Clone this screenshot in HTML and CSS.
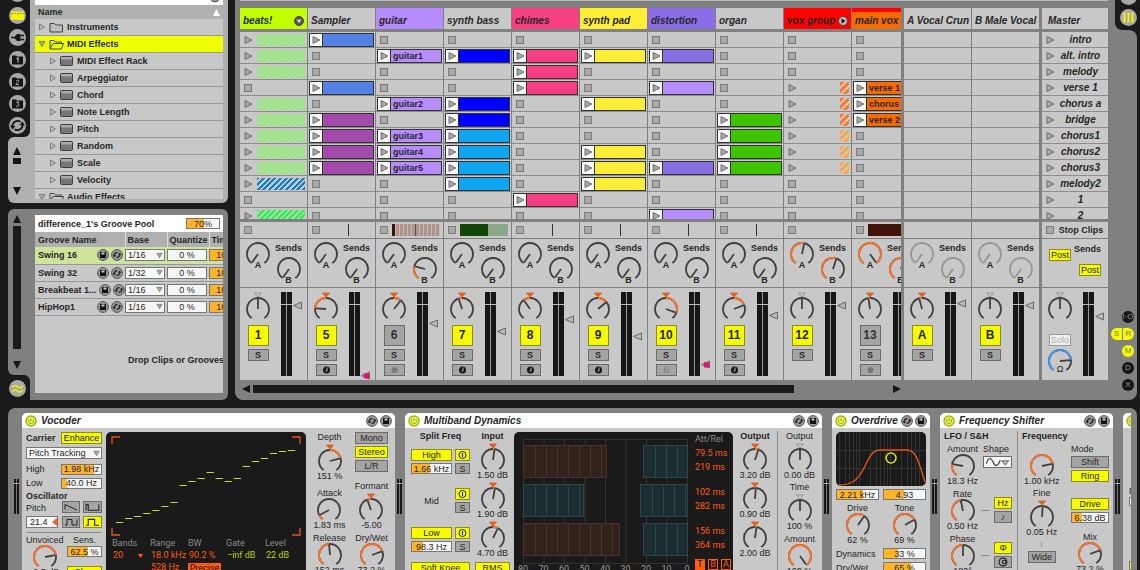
FILE: index.html
```html
<!DOCTYPE html>
<html lang="en">
<head>
<meta charset="utf-8">
<meta name="viewport" content="width=device-width, initial-scale=1">
<title>Session View</title>
<link rel="stylesheet" href="styles.css">
</head>
<body>
<svg class="symbols" aria-hidden="true">
  <symbol id="save" viewBox="0 0 12 12"><circle cx="6" cy="6" r="5.4" fill="#999" stroke="#555"/><path d="M3 3h6v6H3z" fill="#111"/><path d="M4.500 3.500h3v2h-3z" fill="#ccc"/></symbol>
  <symbol id="swap" viewBox="0 0 12 12"><circle cx="6" cy="6" r="5.4" fill="#999" stroke="#555"/><path d="M3.200 7.200C3 5 4.600 3.400 6.500 3.600M8.800 4.800C9 7 7.400 8.600 5.500 8.400" fill="none" stroke="#222" stroke-width="1.300"/><path d="M1.800 6l1.400 2.400L5 6.400zM10.200 6L8.800 3.600 7 5.600z" fill="#222"/></symbol>
  <symbol id="power" viewBox="0 0 12 12"><circle cx="6" cy="6" r="5" fill="#e8f26a" stroke="#a5b400" stroke-width="1.500"/><path d="M6 3v3.500M4.200 4.200a2.600 2.600 0 1 0 3.600 0" fill="none" stroke="#a5b400"/></symbol>
  <symbol id="onoff" viewBox="0 0 12 12"><circle cx="6" cy="6" r="4.200" fill="none" stroke="#222" stroke-width="1.200"/><path d="M6 3.500v5" stroke="#222" stroke-width="1.300"/></symbol>
  <symbol id="folder" viewBox="0 0 15 11"><path d="M1 10V1.500h4.500L7 3h6.500v7z" fill="#bdbdbd" stroke="#444" /></symbol>
  <symbol id="folder-open" viewBox="0 0 15 11"><path d="M1 10V1.500h4L6.500 3h6v2" fill="none" stroke="#444"/><path d="M1 10l3-5.500h10.500L12.500 10z" fill="none" stroke="#444"/></symbol>
  <symbol id="device" viewBox="0 0 13 10"><rect x=".5" y=".5" width="12" height="9" rx="1" fill="#777" stroke="#3c3c3c"/><path d="M1 1h11v2.500H1z" fill="#aaa"/></symbol>
  <symbol id="tri-right" viewBox="0 0 8 8"><path d="M1.500 1L6.500 4 1.500 7z" fill="#bbb" stroke="#777" stroke-width=".9"/></symbol>
  <symbol id="tri-down" viewBox="0 0 8 8"><path d="M1 1.500h6L4 6.500z" fill="#aaa" stroke="#777" stroke-width=".9"/></symbol>
  <symbol id="arrow-up" viewBox="0 0 8 8"><path d="M4 0l4 8H0z" fill="#151515"/></symbol>
  <symbol id="arrow-down" viewBox="0 0 8 8"><path d="M0 0h8L4 8z" fill="#151515"/></symbol>
</svg>

<div class="upper">
  <aside class="side">
    <section class="browser" aria-label="Browser">
      <div class="browser-left">
        <div class="rail-frame"><nav class="rail">
          <button aria-label="Hide browser"><svg viewBox="0 0 17 17"><path d="M5 11l6-5" stroke="#222"/></svg></button>
          <button aria-label="Live devices"><svg viewBox="0 0 17 17"><path d="M2 4.500h13v8.500H2z" fill="#f4f400"/><path d="M2 6.500h13" stroke="#999900" stroke-dasharray="2 1"/></svg></button>
          <button aria-label="Plug-in devices"><svg viewBox="0 0 17 17"><path d="M2 8.500h4M11.500 6.500H15M11.500 10.500H15" stroke="#151515" stroke-width="1.600"/><path d="M5 8.500l3-3.500h3.500v7H8z" fill="#151515"/></svg></button>
          <button aria-label="Files 1"><svg viewBox="0 0 17 17"><path d="M3 4.500h4l1 1h6v8H3z" fill="#151515"/><path d="M7.500 8l1.500-1v4.500" fill="none" stroke="#aaa" stroke-width="1.300"/></svg></button>
          <button aria-label="Files 2"><svg viewBox="0 0 17 17"><path d="M3 4.500h4l1 1h6v8H3z" fill="#151515"/><path d="M7 8q1.500-1.500 3 0c0 1.500-3 1.500-3 3.500h3" fill="none" stroke="#aaa"/></svg></button>
          <button aria-label="Files 3"><svg viewBox="0 0 17 17"><path d="M3 4.500h4l1 1h6v8H3z" fill="#151515"/><path d="M7 7h3L8.500 9q2 0 1.300 1.700-1 1.300-2.800.3" fill="none" stroke="#aaa"/></svg></button>
          <button aria-label="Hot-swap"><svg viewBox="0 0 17 17"><path d="M3.500 9.500C3 5.500 7.500 2.500 11.500 4.800M13.500 7.500c.5 4-4 7-8 4.700" fill="none" stroke="#151515" stroke-width="1.800"/><path d="M1 8.500l2.500 4 3-3.500zM16 8.500l-2.500-4-3 3.500z" fill="#151515"/></svg></button>
        </nav></div>
        <div class="scroll-arrows">
          <svg class="arrow"><use href="#arrow-up"/></svg>
          <span class="thumb"></span>
          <svg class="arrow last"><use href="#arrow-down"/></svg>
        </div>
      </div>
      <div class="browser-main">
        <div class="list">
          <div class="search"><svg viewBox="0 0 10 10"><circle cx="5" cy="5" r="4" fill="#999" stroke="#555"/></svg></div>
          <div class="list-head"><span>Name</span><svg viewBox="0 0 8 8"><path d="M4 0l4 8H0z" fill="#fff"/></svg></div>
          <div class="item"><svg class="tri"><use href="#tri-right"/></svg><svg class="fold"><use href="#folder"/></svg>Instruments</div>
          <div class="item selected"><svg class="tri"><use href="#tri-down"/></svg><svg class="fold"><use href="#folder-open"/></svg>MIDI Effects</div>
          <div class="item child"><svg class="tri"><use href="#tri-right"/></svg><svg class="dev"><use href="#device"/></svg>MIDI Effect Rack</div>
          <div class="item child"><svg class="tri"><use href="#tri-right"/></svg><svg class="dev"><use href="#device"/></svg>Arpeggiator</div>
          <div class="item child"><svg class="tri"><use href="#tri-right"/></svg><svg class="dev"><use href="#device"/></svg>Chord</div>
          <div class="item child"><svg class="tri"><use href="#tri-right"/></svg><svg class="dev"><use href="#device"/></svg>Note Length</div>
          <div class="item child"><svg class="tri"><use href="#tri-right"/></svg><svg class="dev"><use href="#device"/></svg>Pitch</div>
          <div class="item child"><svg class="tri"><use href="#tri-right"/></svg><svg class="dev"><use href="#device"/></svg>Random</div>
          <div class="item child"><svg class="tri"><use href="#tri-right"/></svg><svg class="dev"><use href="#device"/></svg>Scale</div>
          <div class="item child"><svg class="tri"><use href="#tri-right"/></svg><svg class="dev"><use href="#device"/></svg>Velocity</div>
          <div class="item"><svg class="tri"><use href="#tri-down"/></svg><svg class="fold"><use href="#folder-open"/></svg>Audio Effects</div>
        </div>
      </div>
    </section>

    <section class="groove" aria-label="Groove Pool">
      <div class="groove-left">
        <div class="groove-scroll">
          <svg class="arrow"><use href="#arrow-up"/></svg>
          <span class="bar"></span>
          <svg class="arrow"><use href="#arrow-down"/></svg>
        </div>
        <div class="groove-tab"><div class="groove-tab-inner"><button aria-label="Groove Pool"><svg viewBox="0 0 17 17"><path d="M3 7.500c2.500-3 4-2 5.500-.8s3 1.800 5.500-1.200M3 12c2.500-3 4-2 5.500-.8s3 1.800 5.500-1.200" fill="none" stroke="#e6f000" stroke-width="1.600"/></svg></button></div></div>
      </div>
      <div class="groove-main">
        <div class="pool">
          <div class="pool-title"><span>difference_1's Groove Pool</span><input class="field amount" aria-label="Global groove amount" value="70%" style="--fill:54%"></div>
          <table class="grooves">
            <thead><tr><th class="c-name">Groove Name</th><th class="c-base">Base</th><th class="c-quant">Quantize</th><th>Timing</th></tr></thead>
            <tbody id="groove-rows"></tbody>
          </table>
          <p class="hint">Drop Clips or Grooves Here</p>
        </div>
      </div>
    </section>
  </aside>

  <main class="session">
    <div class="session-main">
      <div class="overview"></div>
      <div class="board">
        <div class="tracks" id="tracks"></div>
        <div class="returns" id="returns"></div>
        <div class="master" id="master"></div>
      </div>
      <div class="hscroll">
        <svg viewBox="0 0 8 8"><path d="M8 0v8L0 4z" fill="#151515"/></svg>
        <div class="hscroll-lane"><div class="hscroll-thumb"></div></div>
        <svg viewBox="0 0 8 8"><path d="M0 0v8l8-4z" fill="#151515"/></svg>
      </div>
    </div>
    <div class="session-rail">
      <div class="notch"><div class="notch-inner">
        <button aria-label="Arrangement"><svg viewBox="0 0 17 17"><path d="M4 11h9" stroke="#333"/></svg></button>
        <button aria-label="Session"><svg viewBox="0 0 17 17"><path d="M4.500 3.500v10M8.500 3.500v10M12.500 3.500v10" stroke="#f4f400" stroke-width="2"/></svg></button>
      </div></div>
      <div class="toggles">
        <button class="dot">I·O</button>
        <div class="pair"><button class="dot on half-l">S</button><button class="dot on half-r">R</button></div>
        <button class="dot on">M</button>
        <button class="dot">D</button>
        <button class="dot">X</button>
      </div>
    </div>
  </main>
</div>

<section class="chain" aria-label="Devices">
  <div class="chain-inner">
    <article class="device vocoder">
      <header><svg class="ic"><use href="#power"/></svg><h2>Vocoder</h2><svg class="ic"><use href="#swap"/></svg><svg class="ic"><use href="#save"/></svg></header>
      <div class="body">
        <div class="voc-left">
          <div class="row"><b>Carrier</b><button class="btn on w41">Enhance</button></div>
          <div class="select-wrap mt3"><select aria-label="Carrier"><option>Pitch Tracking</option></select><svg><use href="#tri-down"/></svg></div>
          <label class="row mt4">High<input class="field w41" value="1.98 kHz" style="--fill:82%"></label>
          <label class="row mt2">Low<input class="field w41" value="40.0 Hz" style="--fill:12%"></label>
          <b class="line mt2">Oscillator</b>
          <div class="osc">
            <label for="osc-pitch" class="osc-label">Pitch</label>
            <button class="btn wave" aria-label="Saw"><svg viewBox="0 0 16 9"><path d="M2 7V2l12 5.500" /></svg></button>
            <button class="btn wave" aria-label="Pulse"><svg viewBox="0 0 16 9"><path d="M2 7.500V2h2v5.500h10V2"/></svg></button>
            <div class="pitch-field"><input class="field" id="osc-pitch" value="21.4" style="--fill:0%"><svg viewBox="0 0 5 8"><path d="M5 0v8L0 4z" fill="#ff5c2c"/></svg></div>
            <button class="btn wave" aria-label="Square low"><svg viewBox="0 0 16 9"><path d="M2 7.500h2V2h5v5.500h5V2"/></svg></button>
            <button class="btn wave on" aria-label="Square"><svg viewBox="0 0 16 9"><path d="M2 7.500h2V2h6v5.500h4"/></svg></button>
          </div>
          <div class="unvoiced">
            <live-knob label="Unvoiced" value="-0.5 dB" angle="80"></live-knob>
            <div class="sens"><label for="sens">Sens.</label><input class="field" id="sens" value="62.5 %" style="--fill:62%"><button class="btn on mt9">Slow</button></div>
          </div>
        </div>
        <div class="lcd voc-lcd">
          <svg class="bands" id="vocoder-bands" viewBox="0 0 200 106"><path d="M6 12V5h8M186 5h8v7M6 96v7h8M186 103h8v-7" fill="none" stroke="#e8550c" stroke-width="1.300"/></svg>
          <div class="lcd-grid">
            <span class="dim">Bands</span><span class="dim">Range</span><span class="dim">BW</span><span class="dim">Gate</span><span class="dim">Level</span>
            <span class="pad">20 <svg class="mini" viewBox="0 0 5 4"><path d="M0 0h5L2.500 4z" fill="#ff5c0c"/></svg></span><span class="pad">18.0 kHz</span><span class="pad">90.2 %</span><span class="pad lime">−inf dB</span><span class="pad lime">22 dB</span>
            <span></span><span class="pad">528 Hz</span><span class="precise">Precise</span>
          </div>
        </div>
        <div class="knob-col w37">
          <live-knob label="Depth" value="151 %" angle="75" from="0" marker="on"></live-knob>
          <live-knob class="mt7" label="Attack" value="1.83 ms" angle="-118"></live-knob>
          <live-knob class="mt3" label="Release" value="152 ms" angle="-5"></live-knob>
        </div>
        <div class="knob-col w37">
          <button class="btn w33">Mono</button><button class="btn on w33 mt2">Stereo</button><button class="btn w33 mt2">L/R</button>
          <live-knob class="mt9" label="Formant" value="-5.00" angle="-20" from="0" marker="on"></live-knob>
          <live-knob class="mt3" label="Dry/Wet" value="73.2 %" angle="70"></live-knob>
        </div>
      </div>
    </article>

    <article class="device multiband">
      <header><svg class="ic"><use href="#power"/></svg><h2>Multiband Dynamics</h2><svg class="ic"><use href="#swap"/></svg><svg class="ic"><use href="#save"/></svg></header>
      <div class="body tight">
        <div class="split">
          <b class="line center">Split Freq</b>
          <div class="band-set">
            <button class="btn on">High</button><button class="btn on" aria-label="High band on"><svg viewBox="0 0 12 12"><use href="#onoff"/></svg></button>
            <input class="field" aria-label="High crossover" value="1.66 kHz" style="--fill:45%"><button class="btn">S</button>
          </div>
          <div class="band-set">
            <span class="mid">Mid</span><button class="btn on" aria-label="Mid band on"><svg viewBox="0 0 12 12"><use href="#onoff"/></svg></button>
            <button class="btn">S</button>
          </div>
          <div class="band-set">
            <button class="btn on">Low</button><button class="btn on" aria-label="Low band on"><svg viewBox="0 0 12 12"><use href="#onoff"/></svg></button>
            <input class="field" aria-label="Low crossover" value="98.3 Hz" style="--fill:27%"><button class="btn">S</button>
          </div>
          <button class="btn on knee">Soft Knee</button>
        </div>
        <div class="knob-col input-col">
          <b class="line center">Input</b>
          <live-knob value="1.50 dB" angle="8" from="0" marker="on"></live-knob>
          <live-knob value="1.90 dB" angle="10" from="0" marker="on"></live-knob>
          <live-knob value="4.70 dB" angle="27" from="0" marker="on"></live-knob>
          <button class="btn on mt4 full">RMS</button>
        </div>
        <div class="lcd multi-lcd">
          <svg class="plot" viewBox="0 0 178 138" id="multi-plot"></svg>
          <div class="times">
            <span class="dim">Att/Rel</span>
            <span>79.5 ms</span><span>219 ms</span>
            <span class="sep">102 ms</span><span>282 ms</span>
            <span class="sep">156 ms</span><span>364 ms</span>
            <div class="tba"><button class="sel">T</button><button>B</button><button>A</button></div>
          </div>
        </div>
        <div class="knob-col output-col">
          <b class="line center">Output</b>
          <live-knob value="3.20 dB" angle="18" from="0" marker="on"></live-knob>
          <live-knob value="0.90 dB" angle="4" from="0" marker="on"></live-knob>
          <live-knob value="2.00 dB" angle="8" from="0" marker="on"></live-knob>
        </div>
        <div class="knob-col global-col">
          <live-knob label="Output" value="0.00 dB" angle="0" from="0" marker="off"></live-knob>
          <live-knob class="mt2" label="Time" value="100 %" angle="0" from="0" marker="off"></live-knob>
          <live-knob class="mt3" label="Amount" value="100 %" angle="145"></live-knob>
        </div>
      </div>
    </article>

    <article class="device overdrive">
      <header><svg class="ic"><use href="#power"/></svg><h2>Overdrive</h2><svg class="ic"><use href="#swap"/></svg><svg class="ic"><use href="#save"/></svg></header>
      <div class="body stack">
        <svg class="curve" viewBox="0 0 90 54">
          <rect width="90" height="54" rx="5" fill="#1a1a1a"/>
          <path d="M0 18.500h90M0 36.500h90M3.500 0v54M9.500 0v54M13.500 0v54M17.500 0v54M20.500 0v54M23.500 0v54M34.500 0v54M40.500 0v54M44.500 0v54M48.500 0v54M51.500 0v54M54.500 0v54M65.500 0v54M71.500 0v54M75.500 0v54M79.500 0v54M83.500 0v54" stroke="#333"/>
          <path d="M3 53C16 53 22 48 28 36S36 18 45 18h26c10 0 12 14 18 32" fill="none" stroke="#e0560c" stroke-width="1.400"/>
          <circle cx="55" cy="26" r="5" fill="none" stroke="#d0e000" stroke-width="1.600"/>
        </svg>
        <div class="two"><input class="field" aria-label="Frequency" value="2.21 kHz" style="--fill:64%"><input class="field" aria-label="Bandwidth" value="4.93" style="--fill:50%"></div>
        <div class="two"><live-knob label="Drive" value="62 %" angle="35"></live-knob><live-knob label="Tone" value="69 %" angle="60"></live-knob></div>
        <label class="row">Dynamics<input class="field w43" value="33 %" style="--fill:33%"></label>
        <label class="row">Dry/Wet<input class="field w43" value="65 %" style="--fill:65%"></label>
      </div>
    </article>

    <article class="device shifter">
      <header><svg class="ic"><use href="#power"/></svg><h2>Frequency Shifter</h2><svg class="ic"><use href="#swap"/></svg><svg class="ic"><use href="#save"/></svg></header>
      <div class="body tight">
        <div class="lfo">
          <b class="line">LFO / S&amp;H</b>
          <div class="lfo-grid">
            <live-knob label="Amount" value="18.3 Hz" angle="-80"></live-knob>
            <div class="shape"><span>Shape</span><button class="btn white" aria-label="Sine"><svg viewBox="0 0 24 9"><path d="M2 6C4 0 6 0 8 4.500S12 9 14.500 3" fill="none" stroke="#333"/><path d="M16 3.500h6L19 7z" fill="#ccc" stroke="#777"/></svg></button></div>
            <live-knob label="Rate" value="0.50 Hz" angle="-12"></live-knob>
            <div class="sync"><i></i><div><button class="btn on">Hz</button><button class="btn">♪</button></div></div>
            <live-knob label="Phase" value="180°" angle="0"></live-knob>
            <div class="sync"><i></i><div><button class="btn on">Φ</button><button class="btn" aria-label="Spin"><svg viewBox="0 0 12 9"><circle cx="6" cy="4.500" r="3.500" fill="none" stroke="#222"/><circle cx="7" cy="4.500" r="1.600" fill="none" stroke="#222"/></svg></button></div></div>
          </div>
        </div>
        <div class="freq">
          <b class="line">Frequency</b>
          <div class="freq-grid">
            <div class="knob-col">
              <live-knob class="mt10" value="1.00 kHz" angle="78"></live-knob>
              <live-knob class="mt2" label="Fine" value="0.05 Hz" angle="4" from="0" marker="on"></live-knob>
              <i class="tick"></i>
              <button class="btn wide">Wide</button>
            </div>
            <div class="mode">
              <span>Mode</span>
              <button class="btn mt2">Shift</button><button class="btn on mt2">Ring</button>
              <button class="btn on mt16">Drive</button><input class="field mt2" aria-label="Drive amount" value="6.38 dB" style="--fill:28%">
              <live-knob class="mt9" label="Mix" value="73.2 %" angle="70"></live-knob>
            </div>
          </div>
        </div>
      </div>
    </article>

    <article class="device cut">
      <header><svg class="ic"><use href="#power"/></svg></header>
      <div class="body cut-body"><span>D</span><i class="cut-field"></i><i class="cut-btn"></i></div>
    </article>
  </div>
</section>
<script src="app.js"></script>
</body>
</html>
```
FILE: styles.css
```css
:root {
  --black: #1a1a1a;
  --frame: #808080;
  --panel: #b0b0b0;
  --face: #c8c8c8;
  --yellow: #f7fb00;
  --orange: #ffb428;
  --hot: #ff5c0c;
  --text: #262626;
}
* { box-sizing: border-box; }
body {
  margin: 0;
  height: 100vh;
  overflow: hidden;
  display: grid;
  grid-template-rows: auto 1fr;
  grid-template-columns: minmax(0, 1fr);
  background: var(--black);
  color: var(--text);
  font: 9px/10px "Liberation Sans", Arial, sans-serif;
}
button, input, select { font: inherit; color: inherit; margin: 0; padding: 0; border: 0; border-radius: 0; }
button { display: block; background: none; text-align: center; }
svg { display: block; flex: none; }
h2, p { margin: 0; }
.symbols { position: absolute; width: 0; height: 0; }

.upper { display: flex; gap: 7px; padding-right: 3px; min-width: 0; }
.side { width: 228px; padding-left: 8px; flex: none; display: grid; grid-template-columns: minmax(0, 1fr); grid-template-rows: 203px 1fr; gap: 6px; font-weight: bold; }

/* browser */
.browser { display: flex; min-height: 0; }
.browser-left { width: 27px; flex: none; display: flex; flex-direction: column; }
.rail-frame { background: var(--panel); height: 137px; }
.rail { width: 22px; height: 137px; background: var(--black); border-radius: 0 0 6px 0; display: flex; flex-direction: column; justify-content: flex-end; gap: 5px; padding: 0 0 3px 1px; overflow: hidden; }
.rail button, .groove-tab button, .notch button { width: 17px; height: 17px; border-radius: 50%; background: #a8a8a8; flex: none; }
.rail button svg, .groove-tab button svg, .notch button svg { width: 17px; height: 17px; fill: none; }
.scroll-arrows { flex: 1; background: var(--panel); border-radius: 6px 0 0 6px; padding: 10px 0 8px 5px; display: flex; flex-direction: column; gap: 3px; }
.arrow { width: 8px; height: 8px; }
.arrow.last { margin-top: auto; }
.thumb { width: 8px; height: 6px; background: #151515; }
.browser-main { flex: 1; min-width: 0; background: var(--panel); border-radius: 0 0 6px 0; padding: 0 5px 4px 0; overflow: hidden; }
.list { height: 199px; overflow: hidden; background: var(--face); }
.search { height: 5px; background: #fff; display: flex; justify-content: flex-end; align-items: flex-end; padding: 0 3px 2px; overflow: hidden; }
.search svg { width: 10px; height: 10px; }
.list-head { height: 14px; padding: 0 3px; background: var(--panel); display: flex; justify-content: space-between; align-items: center; }
.list-head svg { width: 7px; height: 7px; }
.item { height: 17px; padding-left: 3px; display: flex; align-items: center; border-bottom: 1px solid #989898; white-space: nowrap; }
.item.child { padding-left: 14px; }
.item.selected { background: #eeff00; }
.tri { width: 8px; height: 8px; }
.fold { width: 15px; height: 11px; margin: 0 3px; }
.dev { width: 13px; height: 10px; margin: 0 4px 0 3px; }

/* groove pool */
.groove { display: flex; min-height: 0; }
.groove-left { width: 27px; flex: none; display: flex; flex-direction: column; }
.groove-scroll { flex: 1; background: var(--frame); border-radius: 6px 0 0 6px; padding: 6px 0 6px 5px; display: flex; flex-direction: column; gap: 3px; }
.groove-scroll .bar { flex: 1; width: 8px; background: var(--black); margin-bottom: 9px; }
.groove-tab { height: 25px; background: var(--frame); border-radius: 0 0 0 6px; }
.groove-tab-inner { width: 22px; height: 25px; background: var(--black); border-radius: 0 6px 0 0; padding: 5px 0 0 1px; }
.groove-main { flex: 1; min-width: 0; background: var(--frame); border-radius: 0 6px 6px 0; padding: 6px 5px 7px 0; }
.pool { height: 100%; overflow: hidden; background: var(--face); }
.pool-title { height: 17px; padding: 0 3px; background: #fff; display: flex; justify-content: space-between; align-items: center; }
.amount { width: 34px; height: 12px; }
.grooves { border-collapse: collapse; table-layout: fixed; width: 230px; }
.grooves th, .grooves td { height: 17px; padding: 0 1px 0 0; text-align: left; border-bottom: 1px solid #989898; }
.grooves th { height: 15px; background: var(--panel); padding-left: 2px; border-right: 1px solid #ddd; border-bottom: 0; }
.c-name { width: 90px; }
.c-base { width: 42px; }
.c-quant { width: 42px; }
.grooves .c-name { padding-left: 3px; }
.grooves .name { display: flex; align-items: center; gap: 2px; padding: 0 1px 0 3px; }
.grooves .name span { flex: 1; white-space: nowrap; }
.grooves .name svg { width: 12px; height: 12px; }
.grooves tr.sel td { background: #cde49b; }
.grooves .field, .grooves .select-wrap { width: 40px; height: 12px; font-weight: normal; }
.hint { padding: 39px 0 0 93px; white-space: nowrap; }

/* shared controls */
.field {
  height: 11px; min-width: 0; text-align: center; border: 1px solid #777; font-weight: normal;
  background: linear-gradient(to right, var(--orange) var(--fill), #f6f6f6 var(--fill));
}
.btn { height: 12px; background: #a4a4a4; border: 1px solid #6c6c6c; line-height: 10px; }
.btn.on { background: var(--yellow); border-color: #8c8c20; }
.btn.white { background: #f6f6f6; }
.btn svg { margin: 0 auto; width: 100%; height: 10px; }
.select-wrap { display: grid; height: 12px; }
.select-wrap > * { grid-area: 1 / 1; }
.select-wrap select { appearance: none; width: 100%; background: #f6f6f6; border: 1px solid #777; padding-left: 2px; }
.select-wrap svg { width: 7px; height: 7px; justify-self: end; align-self: center; margin-right: 2px; pointer-events: none; }
live-knob { display: flex; flex-direction: column; align-items: center; text-align: center; white-space: nowrap; }
.dial { position: relative; display: block; }
.dial input { position: absolute; inset: 0; width: 100%; height: 100%; opacity: 0; }
.w33 { width: 33px; }
.w37 { width: 37px; }
.w41 { width: 41px; }
.w43 { width: 43px; }
.mt2 { margin-top: 2px; }
.mt3 { margin-top: 3px; }
.mt4 { margin-top: 4px; }
.mt7 { margin-top: 7px; }
.mt9 { margin-top: 9px; }
.mt10 { margin-top: 10px; }
.mt16 { margin-top: 16px; }

/* session */
.session { flex: 1; min-width: 0; display: flex; }
.session-main { flex: 1; min-width: 0; background: var(--frame); padding-left: 5px; border-radius: 0 0 0 8px; }
.overview { height: 1px; background: #bbb; }
.board { margin-top: 7px; display: flex; gap: 3px; }
.tracks { flex: 1; min-width: 0; display: flex; gap: 1px; overflow: hidden; }
.returns { display: flex; gap: 1px; }
.col { width: 67px; flex: none; display: flex; flex-direction: column; }
.master .col { width: 66px; }
.head { height: 21px; display: flex; align-items: center; justify-content: space-between; padding: 4px 3px 0; font: italic bold 10px/12px "Liberation Sans", Arial, sans-serif; white-space: nowrap; overflow: hidden; }
.head.grouped { border-top: 4px solid #f00; padding-top: 0; }
.head svg { width: 10px; height: 10px; }
.master .head { padding-left: 6px; }
.slots { margin-top: 3px; height: 187px; overflow: hidden; }
.slot { height: 16px; background: var(--face); border-bottom: 1px solid #8c8c8c; display: flex; align-items: center; padding-left: 4px; }
.slot.filled { padding: 0 1px; }
.stop { width: 8px; height: 8px; background: #a8a8a8; border: 1px solid #7c7c7c; flex: none; }
.launch { width: 9px; height: 10px; flex: none; }
.launch svg { width: 9px; height: 10px; }
.clip { flex: 1; height: 14px; display: flex; align-items: center; border: 1px solid #333; overflow: hidden; font-weight: bold; white-space: nowrap; }
.clip .play { width: 13px; height: 12px; background: #fff; border-right: 1px solid #333; display: grid; place-items: center; flex: none; margin-right: 2px; }
.clip .play svg { width: 9px; height: 10px; }
.hatch { height: 12px; margin-left: auto; margin-right: 2px; width: 48px; background: repeating-linear-gradient(135deg, var(--ink) 0 2px, var(--face) 2px 4px); }
.hatch.narrow { width: 9px; background: repeating-linear-gradient(135deg, var(--ink) 0 3px, var(--face) 3px 5px); }
.scene { flex: 1; text-align: center; padding-right: 2px; font: italic bold 10px/12px "Liberation Sans", Arial, sans-serif; }
.status { margin-top: 3px; height: 16px; padding-left: 4px; background: var(--face); display: flex; align-items: center; font-weight: bold; overflow: hidden; }
.status .graph { margin-left: 4px; width: 48px; height: 12px; }
.status .label { flex: 1; text-align: center; }
.sends { margin-top: 1px; height: 48px; background: var(--face); display: flex; font-weight: bold; }
.send-a { width: 36px; padding-top: 3px; }
.send-b { width: 25px; padding-top: 4px; display: flex; flex-direction: column; align-items: center; }
.send-b live-knob { margin-top: 4px; }
.sends .val { line-height: 8px; margin-top: -3px; }
.posts { width: 100%; padding: 5px 7px 0 7px; display: flex; justify-content: space-between; align-items: flex-start; }
.posts .btn { width: 22px; font-weight: normal; }
.posts .first { margin-top: 5px; }
.posts-right { display: flex; flex-direction: column; align-items: flex-end; gap: 10px; }
.strip { margin-top: 1px; height: 92px; background: var(--face); display: grid; grid-template-columns: 36px 11px 10px; column-gap: 5px; }
.strip-left { padding-top: 2px; display: flex; flex-direction: column; align-items: center; gap: 3px; }
.strip-left .btn { width: 21px; font-weight: bold; }
.strip-left .num { height: 21px; margin-top: 3px; font: bold 12px/19px "Liberation Sans", Arial, sans-serif; }
.strip-left .num.off { color: #333; }
.strip-left .solo { width: 22px; background: #f0f0f0; color: #aaa; font-weight: normal; border-color: #999; margin-top: 12px; }
.strip-left .cue .val { margin-top: -7px; }
.meter { margin-top: 4px; height: 84px; background: linear-gradient(to bottom, transparent 12px, #bbb 12px 13px, transparent 13px), linear-gradient(to right, #171717 5px, #999 5px 6px, #171717 6px); }
.lane { position: relative; margin-left: -4px; width: 9px; height: 92px; overflow: hidden; }
.lane svg { position: absolute; left: 0; width: 9px; height: 9px; }
.lane input { position: absolute; inset: 0; width: 100%; height: 100%; opacity: 0; }
.hscroll { height: 20px; display: flex; align-items: center; gap: 3px; padding: 0 207px 2px 2px; }
.hscroll svg { width: 8px; height: 8px; }
.hscroll-lane { flex: 1; }
.hscroll-thumb { width: 85%; height: 8px; background: var(--black); }
.session-rail { width: 29px; flex: none; display: flex; flex-direction: column; }
.notch { background: var(--frame); padding-left: 7px; }
.notch-inner { height: 30px; background: var(--black); border-radius: 0 0 0 7px; display: flex; flex-direction: column; justify-content: flex-end; gap: 4px; padding: 0 0 4px 5px; overflow: hidden; }
.toggles { flex: 1; background: var(--frame); border-radius: 0 8px 8px 0; display: flex; flex-direction: column; align-items: flex-end; justify-content: flex-end; gap: 5px; padding: 0 3px 9px 0; }
.dot { width: 12px; height: 12px; border-radius: 50%; background: #151515; color: #999; font-size: 8px; line-height: 12px; }
.dot.on { background: var(--yellow); color: #777; }
.pair { display: flex; gap: 1px; }
.pair .dot { width: 11px; }
.pair .half-l { border-radius: 6px 0 0 6px; }
.pair .half-r { border-radius: 0 6px 6px 0; }

/* device chain */
.chain { margin: 8px 3px 0 8px; padding: 5px 6px 0 0; background: var(--frame); border-radius: 7px 7px 0 0; min-height: 0; }
.chain-inner { display: flex; height: 100%; overflow: hidden; }
.device { flex: none; display: flex; margin-left: 10px; flex-direction: column; background: var(--face); border-radius: 5px 5px 0 0; position: relative; }
.device::before { content: ""; position: absolute; left: -8px; top: 66px; width: 5px; height: 35px; background: linear-gradient(to bottom, transparent 4px, #aaa 4px 5px, transparent 5px), linear-gradient(to right, #171717 2px, #777 2px 3px, #171717 3px); }
.device header { height: 15px; background: #fff; border-radius: 5px 5px 0 0; display: flex; align-items: center; gap: 2px; padding: 0 3px; }
.device h2 { flex: 1; margin-left: 2px; white-space: nowrap; font: italic bold 10px/12px "Liberation Sans", Arial, sans-serif; }
.ic { width: 12px; height: 12px; }
.body { flex: 1; min-height: 0; display: flex; padding-top: 4px; }
.body.tight { padding-top: 3px; }
.row { display: flex; justify-content: space-between; align-items: center; height: 12px; }
.line { display: block; height: 10px; }
.center { text-align: center; }
.knob-col { display: flex; flex-direction: column; align-items: center; flex: none; }
.full { width: 100%; }
.lcd { background: var(--black); border-radius: 5px 5px 0 0; color: var(--hot); font-family: Roboto, sans-serif; }
.dim { color: #8a8a8a; }
.lime { color: #b9d000; }

.device.vocoder { width: 373px; margin-left: 14px; }
.vocoder .body { padding-left: 4px; }
.voc-left { width: 76px; margin-right: 4px; flex: none; }
.osc { display: grid; grid-template-columns: 32px 18px 19px; justify-content: space-between; row-gap: 3px; border-bottom: 1px solid #888; padding-bottom: 4px; }
.osc-label { align-self: end; }
.pitch-field { display: grid; }
.pitch-field > * { grid-area: 1 / 1; }
.pitch-field .field { width: 32px; height: 12px; text-align: left; padding-left: 3px; }
.pitch-field svg { width: 5px; height: 8px; justify-self: end; align-self: center; margin-right: 1px; pointer-events: none; }
.wave svg { fill: none; stroke: #222; stroke-width: 1; }
.unvoiced { display: flex; justify-content: space-between; padding-top: 2px; }
.sens { width: 35px; display: flex; flex-direction: column; text-align: center; }
.sens .field { width: 100%; margin-top: 1px; }
.voc-lcd { width: 200px; margin-right: 5px; flex: none; }
.bands { width: 200px; height: 106px; }
.lcd-grid { padding-left: 6px; display: grid; grid-template-columns: 38px 38px 38px 39px 40px; grid-auto-rows: 12px; white-space: nowrap; }
.pad { padding-left: 1px; }
.mini { display: inline-block; width: 5px; height: 4px; margin-left: 13px; }
.precise { background: var(--hot); color: #111; height: 11px; width: 33px; text-align: center; margin-top: 1px; }
.vocoder .knob-col + .knob-col { margin-left: 5px; }

.device.multiband { width: 417px; }
.multiband .body { padding-left: 6px; }
.split { width: 59px; }
.band-set { display: grid; grid-template-columns: 41px 15px; justify-content: space-between; row-gap: 2px; grid-template-rows: 12px 11px; height: 25px; margin-top: 14px; }
.line + .band-set { margin-top: 8px; }
.band-set .btn { height: auto; }
.mid { grid-row: 1 / span 2; align-self: center; text-align: center; }
.knee { width: 100%; margin-top: 10px; }
.input-col { width: 35px; margin: 0 4px 0 5px; }
.multi-lcd { width: 219px; margin-top: 1px; display: flex; flex: none; }
.plot { width: 178px; height: 138px; }
.plot text { font: 9px Roboto, sans-serif; fill: #999; text-anchor: middle; }
.times { flex: 1; display: flex; flex-direction: column; padding: 2px 0 0 3px; gap: 4px; white-space: nowrap; }
.times .sep { margin-top: 11px; }
.tba { display: flex; gap: 3px; margin-top: 5px; }
.tba button { width: 10px; height: 11px; border: 1px solid var(--hot); line-height: 9px; }
.tba .sel { background: var(--hot); color: #111; }
.output-col { width: 45px; border-right: 1px solid #888; }
.global-col { width: 43px; }

.device.overdrive { width: 98px; }
.stack { flex-direction: column; gap: 3px; padding-left: 4px; padding-right: 4px; }
.curve { width: 90px; height: 54px; }
.two { display: grid; grid-template-columns: 1fr 1fr; gap: 4px; }
.two .field { width: 100%; }

.device.shifter { width: 173px; }
.shifter .body { padding: 3px 4px 0 4px; }
.lfo { width: 74px; border-right: 1px solid #888; padding-right: 5px; }
.lfo-grid { display: grid; grid-template-columns: 37px 1fr; row-gap: 3px; padding-top: 3px; }
.shape { display: flex; flex-direction: column; gap: 2px; padding-left: 2px; }
.sync { display: flex; align-items: center; justify-content: space-between; }
.sync i { width: 9px; height: 1px; background: #888; }
.sync div { display: grid; gap: 2px; }
.sync .btn { width: 18px; }
.freq { padding-left: 4px; flex: 1; }
.freq-grid { display: flex; justify-content: space-between; padding: 3px 0 0 2px; }
.tick { width: 1px; height: 5px; background: #999; margin-top: 5px; }
.wide { width: 28px; margin-top: 4px; }
.mode { width: 38px; display: flex; flex-direction: column; flex: none; }
.mode .field { width: 100%; }

.device.cut { width: 120px; }
.cut-body { flex-direction: column; padding: 58px 0 0 6px; }
.cut-field { height: 11px; border: 1px solid #777; background: #f6f6f6; margin-top: 1px; }
.cut-btn { height: 12px; border: 1px solid #777; background: var(--yellow); margin-top: 55px; }
```
FILE: app.js
```js
const PLAY = '<svg viewBox="0 0 9 10"><path d="M1 1.500L8 5 1 8.500z" fill="#a8a8a8" stroke="#6c6c6c"/></svg>';

const polar = (cx, cy, r, deg) => {
  const a = (deg - 90) * Math.PI / 180;
  return [(cx + r * Math.cos(a)).toFixed(2), (cy + r * Math.sin(a)).toFixed(2)];
};
const arc = (cy, from, to) => {
  const [x1, y1] = polar(12, cy, 11, from);
  const [x2, y2] = polar(12, cy, 11, to);
  return `M${x1} ${y1}A11 11 0 ${to - from > 180 ? 1 : 0} 1 ${x2} ${y2}`;
};

/* marker: "on" (orange), "off" (grey) or absent; from: angle where the coloured arc starts */
function dial({ angle, from = -145, marker, color = '#ff7228', ring = '#404040', name = 'Knob' }) {
  const cy = marker ? 19 : 12;
  const h = marker ? 29 : 22;
  const lo = Math.min(from, angle), hi = Math.max(from, angle);
  const [px, py] = polar(12, cy, 10.5, angle);
  const mark = marker ? `<path d="M8.500 3h7L12 7z" fill="${marker === 'on' ? '#ff5c0c' : '#ccc'}" stroke="${marker === 'on' ? '#c85a28' : '#888'}" stroke-width=".8"/>` : '';
  const value = hi > lo ? `<path d="${arc(cy, lo, hi)}" stroke="${color}"/>` : '';
  return `<span class="dial"><svg width="24" height="${h}" viewBox="0 0 24 ${h}">
    <g fill="none" stroke-width="1.800"><path d="${arc(cy, -145, 145)}" stroke="${ring}"/>${value}
    <path d="M12 ${cy}L${px} ${py}" stroke="${ring}"/></g>${mark}</svg>
    <input type="range" min="-145" max="145" value="${angle}" aria-label="${name}"></span>`;
}

class LiveKnob extends HTMLElement {
  connectedCallback() {
    const get = (n) => this.getAttribute(n) ?? undefined;
    const label = get('label');
    this.innerHTML = (label ? `<span>${label}</span>` : '') +
      dial({ angle: +get('angle'), from: +(get('from') ?? -145), marker: get('marker'), color: get('color'), ring: get('ring'), name: label || 'Level' }) +
      (get('value') ? `<span class="val">${get('value')}</span>` : '');
  }
}
customElements.define('live-knob', LiveKnob);

/* groove pool */
document.getElementById('groove-rows').innerHTML = [
  ['Swing 16', '1/16'], ['Swing 32', '1/32'], ['Breakbeat 1...', '1/16'], ['HipHop1', '1/16']
].map(([name, base], i) => `<tr class="${i ? '' : 'sel'}">
  <td><div class="name"><span>${name}</span><svg viewBox="0 0 12 12"><use href="#save"/></svg><svg viewBox="0 0 12 12"><use href="#swap"/></svg></div></td>
  <td><div class="select-wrap"><select aria-label="Base"><option>${base}</option></select><svg><use href="#tri-down"/></svg></div></td>
  <td><input class="field" aria-label="Quantize" value="0 %" style="--fill:0%"></td>
  <td><input class="field" aria-label="Timing" value="100 %" style="--fill:100%"></td></tr>`).join('');

/* session tracks */
const clips = (color, rows, names = []) => Object.fromEntries(rows.map((r, i) => [r, { color, name: names[i] || '' }]));
const hatch = (ink, rows, narrow) => Object.fromEntries(rows.map((r) => [r, { ink, narrow }]));
const LINE = 'linear-gradient(to right, transparent 24px, #333 24px 25px, transparent 25px)';

const tracks = [
  { name: 'beats!', bg: '#bfff00', icon: 'down', slots: { ...hatch('#84fa62', [0, 1, 2, 4, 5, 6, 7, 8]), ...hatch('#1482c8', [9]), ...hatch('#14ff3c', [11]) }, pan: 0, num: 1, fader: 305 },
  { name: 'Sampler', slots: { ...clips('#5580e4', [0, 3]), ...clips('#a34bad', [5, 6, 7, 8]) }, graph: LINE, pan: -87, num: 5, rec: 'midi', fader: 375, hot: true },
  { name: 'guitar', bg: '#b68cff', slots: clips('#b68cff', [1, 4, 6, 7, 8], ['guitar1', 'guitar2', 'guitar3', 'guitar4', 'guitar5']), graph: 'linear-gradient(to right, #401408 3px, transparent 3px 23px, #555 23px 24px, transparent 24px), repeating-linear-gradient(to right, #b09490 0 3px, #c8bab8 3px 4px)', pan: 38, num: 6, off: true, rec: 'audio', sendB: -75, fader: 323 },
  { name: 'synth bass', slots: { ...clips('#0000ff', [1, 4, 5]), ...clips('#10a4f0', [6, 7, 8, 9]) }, graph: 'linear-gradient(to right, #144608 28px, #8ca88a 28px)', pan: -18, num: 7, rec: 'midi', fader: 331 },
  { name: 'chimes', bg: '#f53f80', slots: clips('#f53f80', [1, 2, 3, 10]), graph: LINE, pan: -35, num: 8, rec: 'midi', fader: 319 },
  { name: 'synth pad', bg: '#ffee38', slots: clips('#ffee38', [1, 4, 7, 8, 9]), graph: LINE, pan: 50, num: 9, rec: 'midi', fader: 336 },
  { name: 'distortion', bg: '#8a6fe4', slots: { ...clips('#8a6fe4', [1, 8]), ...clips('#b68cff', [3, 11]) }, graph: LINE, pan: 110, num: 10, rec: 'dim', fader: 364, hot: true },
  { name: 'organ', slots: clips('#3dc300', [5, 6, 7, 8]), graph: LINE, pan: 68, num: 11, rec: 'midi', fader: 315 },
  { name: 'vox group', bg: '#ff0000', icon: 'right', slots: { ...hatch('#ff7a1c', [3, 4, 5], true), ...hatch('#ffa83c', [6, 7, 8], true) }, pan: 0, num: 12, sendA: 12, sendB: 18, fader: 305 },
  { name: 'main vox', bg: '#f66b00', grouped: true, slots: clips('#f66b00', [3, 4, 5], ['verse 1', 'chorus', 'verse 2']), graph: '#401408', pan: -8, num: 13, off: true, rec: 'audio', sendA: 145, sendB: 18, fader: 305 }
];
const returns = [
  { name: 'A Vocal Crun', empty: true, pan: -15, num: 'A', ring: '#969696', fader: 303 },
  { name: 'B Male Vocal', empty: true, pan: 0, num: 'B', ring: '#969696', fader: 305 }
];
const scenes = ['intro', 'alt. intro', 'melody', 'verse 1', 'chorus a', 'bridge', 'chorus1', 'chorus2', 'chorus3', 'melody2', '1', '2'];

const recIcon = {
  midi: '<svg viewBox="0 0 19 10"><circle cx="9.500" cy="5" r="3.500" fill="#151515"/><path d="M10 2.500v3.500H8.500" stroke="#bbb" fill="none"/></svg>',
  audio: '<svg viewBox="0 0 19 10"><circle cx="9.500" cy="5" r="3" fill="#7a7a7a"/></svg>',
  dim: '<svg viewBox="0 0 19 10"><circle cx="9.500" cy="5" r="3" fill="#888"/><path d="M10 3v3H8.500" stroke="#bbb" fill="none"/></svg>'
};

function slot(t, i) {
  const s = t.slots && t.slots[i];
  if (t.empty) return '<div class="slot"></div>';
  if (!s) return '<div class="slot"><button class="stop" aria-label="Stop"></button></div>';
  if (s.ink) return `<div class="slot"><button class="launch" aria-label="Launch">${PLAY}</button><span class="hatch ${s.narrow ? 'narrow' : ''}" style="--ink:${s.ink}"></span></div>`;
  return `<div class="slot filled"><button class="clip" style="background:${s.color}"><span class="play">${PLAY}</span>${s.name}</button></div>`;
}

function lane(y, hot) {
  return `<div class="lane"><svg style="top:${y - 292}px" viewBox="0 0 9 9"><path d="M8.500 1v7L.5 4.500z" fill="#bbb" stroke="#666"/>${hot ? '<path d="M3 2.500h5v5H3z" fill="#f00878"/>' : ''}</svg><input type="range" aria-label="Volume"></div>`;
}

function column(t) {
  const icon = t.icon ? `<svg viewBox="0 0 10 10"><circle cx="5" cy="5" r="4.500" fill="${t.icon === 'down' ? '#555' : '#bbb'}" stroke="#444"/><path d="${t.icon === 'down' ? 'M2.500 3.500h5L5 7.500z' : 'M3.500 2.500v5l4-2.500z'}" fill="${t.icon === 'down' ? '#ccc' : '#151515'}"/></svg>` : '';
  const ring = t.ring ? ` ring="${t.ring}"` : '';
  return `<div class="col">
    <div class="head ${t.grouped ? 'grouped' : ''}" style="background-color:${t.bg || '#c8c8c8'}"><span>${t.name}</span>${icon}</div>
    <div class="slots">${scenes.map((_, i) => slot(t, i)).join('')}</div>
    <div class="status">${t.empty ? '' : '<button class="stop" aria-label="Stop track"></button>'}${t.graph ? `<span class="graph" style="background:${t.graph}"></span>` : ''}</div>
    <div class="sends"><div class="send-a"><live-knob angle="${t.sendA ?? -145}" value="A"${ring}></live-knob></div>
      <div class="send-b"><span>Sends</span><live-knob angle="${t.sendB ?? -145}" value="B"${ring}></live-knob></div></div>
    <div class="strip"><div class="strip-left">
      <live-knob angle="${t.pan}" from="0" marker="${t.pan ? 'on' : 'off'}"></live-knob>
      <button class="btn num ${t.off ? 'off' : 'on'}">${t.num}</button><button class="btn">S</button>
      ${t.rec ? `<button class="btn" aria-label="Arm">${recIcon[t.rec]}</button>` : ''}</div>
      <div class="meter"></div>${lane(t.fader, t.hot)}</div>
  </div>`;
}

document.getElementById('tracks').innerHTML = tracks.map(column).join('');
document.getElementById('returns').innerHTML = returns.map(column).join('');
document.getElementById('master').innerHTML = `<div class="col">
  <div class="head" style="background-color:#c8c8c8">Master</div>
  <div class="slots">${scenes.map((s) => `<div class="slot"><button class="launch" aria-label="Launch scene">${PLAY}</button><span class="scene">${s}</span></div>`).join('')}</div>
  <div class="status"><button class="stop" aria-label="Stop all"></button><span class="label">Stop Clips</span></div>
  <div class="sends"><div class="posts"><button class="btn on first">Post</button><div class="posts-right"><span>Sends</span><button class="btn on">Post</button></div></div></div>
  <div class="strip"><div class="strip-left"><live-knob angle="0" from="0" marker="off"></live-knob>
    <button class="btn solo">Solo</button><live-knob class="cue" angle="85" color="#3c9cf0" value="Ω"></live-knob></div>
    <div class="meter"></div>${lane(316)}</div></div>`;

/* vocoder filter bank */
const levels = [90, 86, 84, 81, 78, 74, 70, 53, 49, 46, 40, 46, 49, 46, 34, 29, 26, 21, 19, 18];
document.getElementById('vocoder-bands').innerHTML +=
  `<path d="${levels.map((y, i) => `M${(10 + i * 9.05).toFixed(1)} ${y + 0.5}h7.300`).join('')}" stroke="#c8dc14" stroke-width="1.200"/>`;

/* multiband display */
const STEP = 20.5;
const ticks = [80, 70, 60, 50, 40, 30, 20, 10, 0];
const bands = [
  [9, 13, 84, 'brown'], [129, 13, 45, 'teal'],
  [9, 52, 61, 'teal'], [126, 52, 48, 'teal'],
  [9, 91, 97, 'brown'], [129, 91, 45, 'teal']
];
const tone = { brown: ['#33211b', '#49342c'], teal: ['#1c2d31', '#2c464c'] };
document.getElementById('multi-plot').innerHTML =
  `<path d="M9 7.500h165M9 131.500h165${ticks.map((_, i) => `M${9.5 + i * STEP} 7v125`).join('')}" stroke="#333" fill="none"/>` +
  bands.map(([x, y, w, c]) => {
    let lines = '';
    for (let k = 12; k < w; k += 11) lines += `M${x + k + 0.5} ${y}v33`;
    return `<rect x="${x}.5" y="${y}.5" width="${w - 1}" height="32" fill="${tone[c][0]}" stroke="${tone[c][1]}"/><path d="${lines}" stroke="${tone[c][1]}"/>`;
  }).join('') +
  ticks.map((t, i) => `<text x="${9 + i * STEP}" y="140">${t}</text>`).join('');
```
